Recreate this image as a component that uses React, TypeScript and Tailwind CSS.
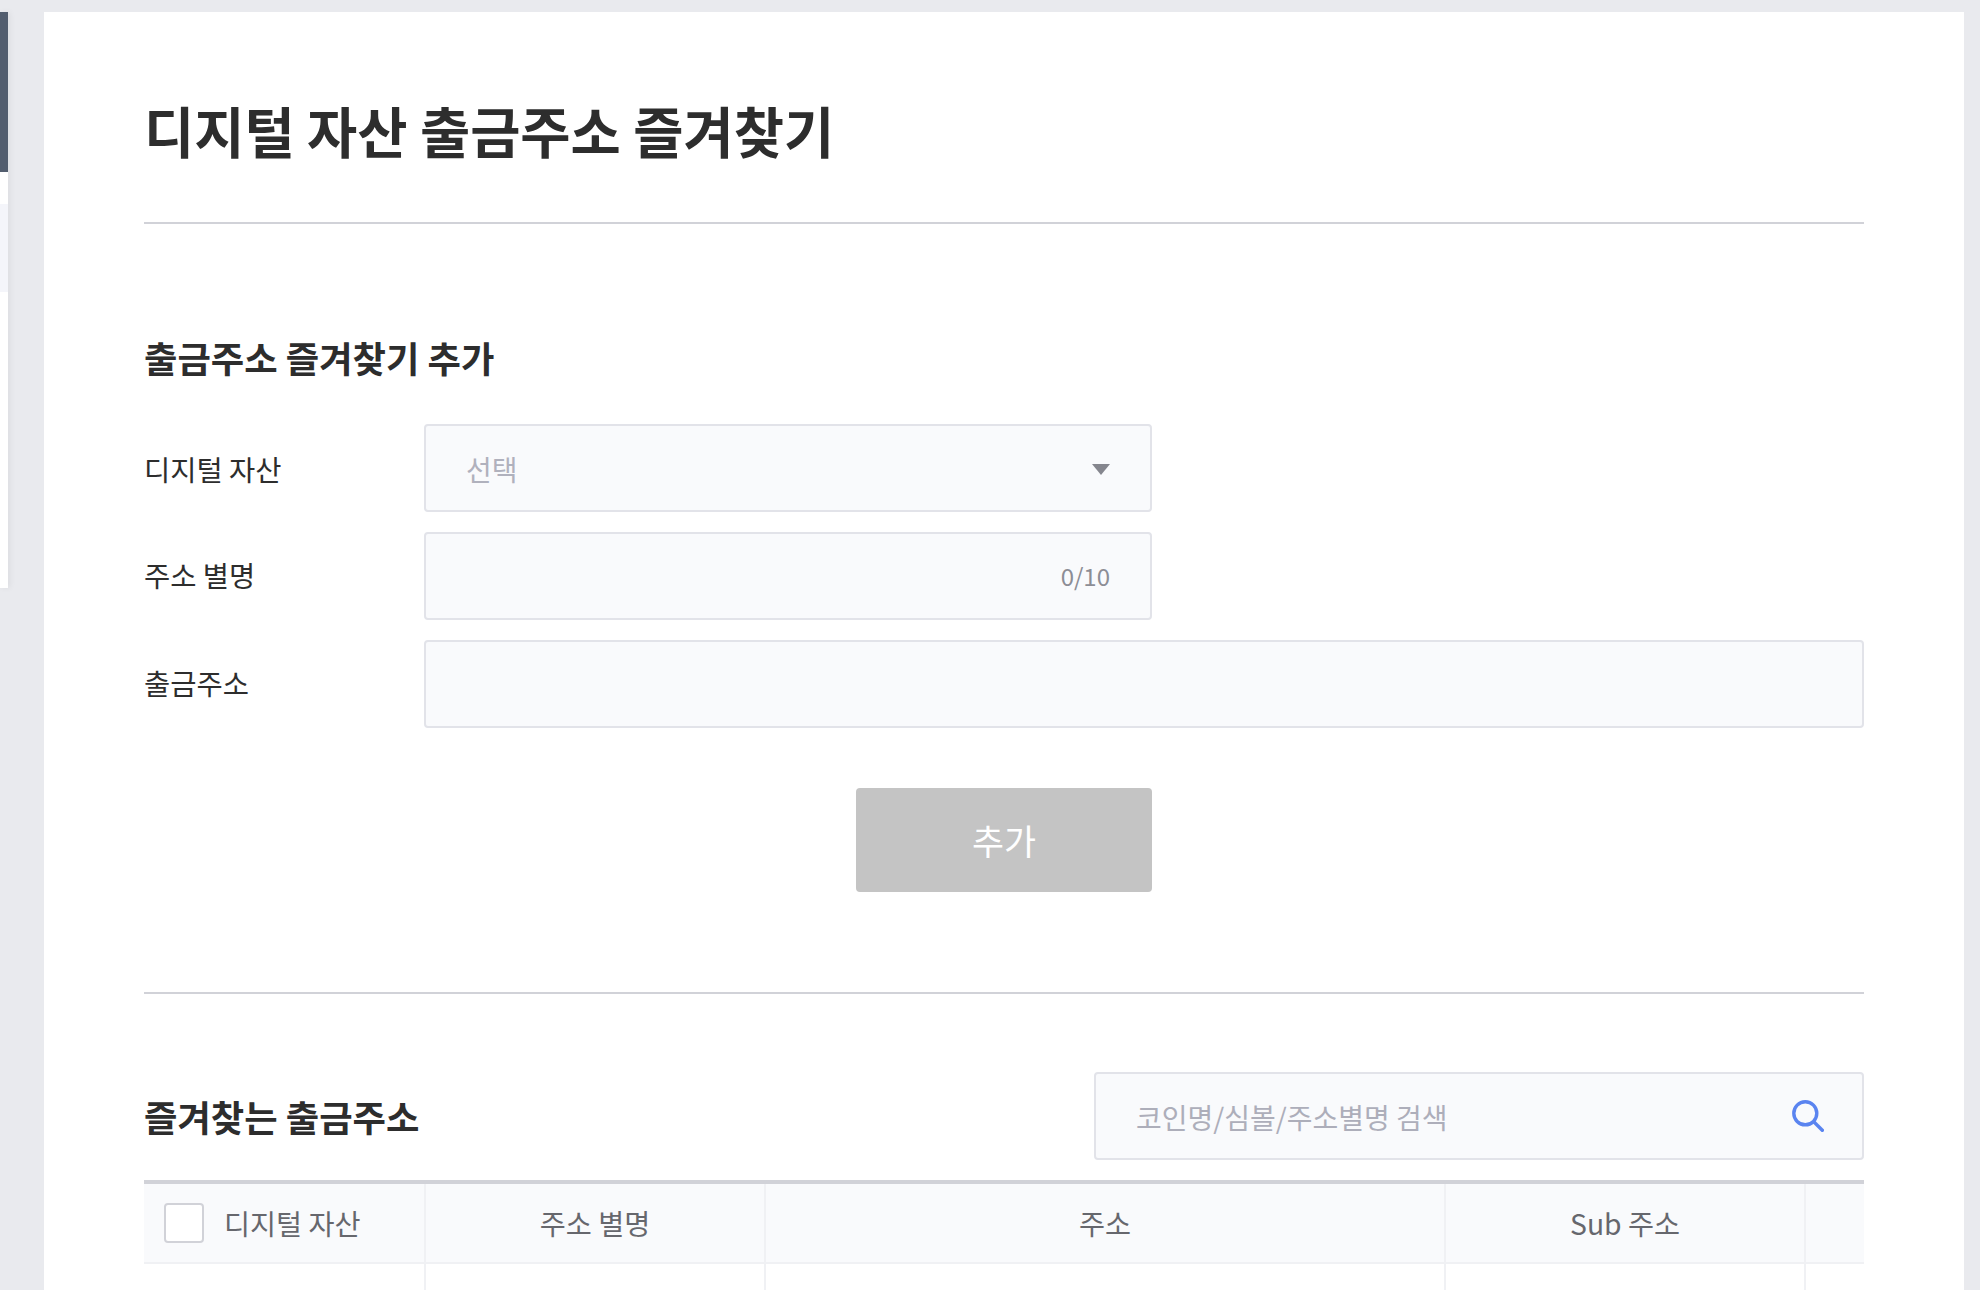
import React from "react";

const Field = ({ w, children }: { w: string; children?: React.ReactNode }) => (
  <div className={`${w} h-[88px] flex items-center justify-between rounded-[4px] border-2 border-[#e2e3e9] bg-[#f9fafc] pl-[40px] pr-[40px] text-[28px]`}>
    {children}
  </div>
);

const Row = ({ label, labelClass, children }: { label: string; labelClass: string; children: React.ReactNode }) => (
  <div className="flex items-center">
    <div className={`w-[280px] text-[28.5px] leading-[40px] text-[#2d2d2d] ${labelClass}`}>{label}</div>
    {children}
  </div>
);

export default function App() {
  return (
    <div className="flex h-[1290px] overflow-hidden bg-[#e9eaee] pt-3 font-['Noto_Sans_CJK_KR',sans-serif]">
      <aside className="h-[576px] w-2 shrink-0 bg-white shadow-[2px_0_6px_rgba(0,0,0,0.06)]">
        <div className="h-[160px] bg-[#525d6e]" />
        <div className="mt-8 h-[88px] bg-[#f4f5fa]" />
      </aside>
      <main className="ml-9 w-[1920px] shrink-0 bg-white px-[100px]">
        <div className="border-b-2 border-[#d1d2d8] pb-[52px] pt-[78px]">
          <h1 className="text-[54.6px] font-bold leading-[80px] text-[#2d2d2d]">디지털 자산 출금주소 즐겨찾기</h1>
        </div>
        <h2 className="mt-[109px] text-[36.3px] font-bold leading-[48px] text-[#2d2d2d]">출금주소 즐겨찾기 추가</h2>
        <div className="mt-[43px] flex flex-col gap-5">
          <Row label="디지털 자산" labelClass="mt-[2px]">
            <Field w="w-[728px]">
              <span className="mt-[2px] text-[#b0b1bd]">선택</span>
              <svg width="18" height="11" viewBox="0 0 18 11" className="mt-[2px] text-[#85868e]">
                <path d="M0 0H18L9 11Z" fill="currentColor" />
              </svg>
            </Field>
          </Row>
          <Row label="주소 별명" labelClass="-mt-[2px]">
            <Field w="w-[728px] justify-end">
              <span className="ml-auto text-[24px] text-[#8c8d95]">0/10</span>
            </Field>
          </Row>
          <Row label="출금주소" labelClass="-mt-[2px]">
            <Field w="flex-1" />
          </Row>
        </div>
        <div className="mt-[60px] flex justify-end pr-[712px]">
          <button className="h-[104px] w-[296px] rounded-[4px] bg-[#c4c4c4] text-[34.8px] text-white">추가</button>
        </div>
        <div className="mt-[100px] h-[2px] bg-[#d1d2d8]" />
        <div className="mt-[78px] flex items-center justify-between">
          <h2 className="text-[36.3px] font-bold leading-[48px] text-[#2d2d2d]">즐겨찾는 출금주소</h2>
          <Field w="w-[770px]">
            <span className="mt-[2px] text-[#adaeba]">코인명/심볼/주소별명 검색</span>
            <svg width="32" height="32" viewBox="0 0 32 32" fill="none" stroke="#5a84f0" strokeWidth="3.4" className="-mr-[2px]">
              <circle cx="13.3" cy="13.3" r="11.5" />
              <path d="M21.5 21.5 31.5 31.5" />
            </svg>
          </Field>
        </div>
        <div className="mt-5 border-t-4 border-[#d1d2d8]">
          <div className="grid h-[80px] grid-cols-[280px_340px_680px_360px_1fr] border-b-2 border-[#f0f1f4] bg-[#f9fafc] text-[28.3px] text-[#66676d]">
            <div className="flex items-center gap-5 pl-5">
              <span className="h-10 w-10 rounded-[4px] border-2 border-[#d1d2d8] bg-white" />
              <span>디지털 자산</span>
            </div>
            <div className="flex items-center justify-center border-l-2 border-[#f0f1f4]">주소 별명</div>
            <div className="flex items-center justify-center border-l-2 border-[#f0f1f4]">주소</div>
            <div className="flex items-center justify-center border-l-2 border-[#f0f1f4]">Sub 주소</div>
            <div className="border-l-2 border-[#f0f1f4]" />
          </div>
          <div className="grid h-[60px] grid-cols-[280px_340px_680px_360px_1fr]">
            <div />
            <div className="border-l-2 border-[#f0f1f4]" />
            <div className="border-l-2 border-[#f0f1f4]" />
            <div className="border-l-2 border-[#f0f1f4]" />
            <div className="border-l-2 border-[#f0f1f4]" />
          </div>
        </div>
      </main>
    </div>
  );
}
